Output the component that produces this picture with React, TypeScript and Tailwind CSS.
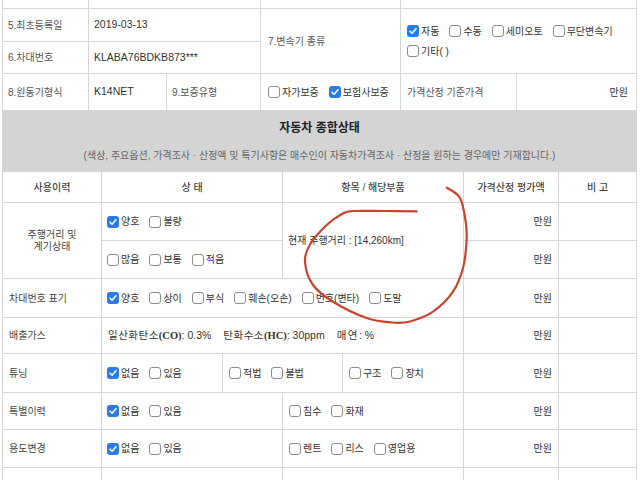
import type { ReactNode } from "react";

/* ── Bits ── */

const LINE = "border-[#d5d5d5]";

function Box({ checked = false }: { checked?: boolean }) {
	if (checked) {
		return (
			<span className="inline-flex size-[12px] shrink-0 items-center justify-center rounded-[3px] bg-[#2a7be4]">
				<svg viewBox="0 0 12 12" className="size-[10px]" fill="none">
					<path d="M2.4 6.2 L4.9 8.6 L9.6 3.2" stroke="#fff" strokeWidth="1.8" strokeLinecap="round" strokeLinejoin="round" />
				</svg>
			</span>
		);
	}
	return <span className="inline-block size-[12px] shrink-0 rounded-[3px] border border-[#8c8c8c] bg-white" />;
}

function Check({ label, checked }: { label: string; checked?: boolean }) {
	return (
		<span className="inline-flex items-center gap-[2px] whitespace-nowrap">
			<Box checked={checked} />
			<span>{label}</span>
		</span>
	);
}

function Checks({ items, className = "" }: { items: [string, boolean?][]; className?: string }) {
	return (
		<div className={`flex flex-wrap items-center gap-x-[10px] gap-y-[5px] ${className}`}>
			{items.map(([label, checked]) => (
				<Check key={label} label={label} checked={checked} />
			))}
		</div>
	);
}

function Cell({ children, className = "" }: { children?: ReactNode; className?: string }) {
	return <div className={`flex items-center border-r border-b ${LINE} bg-white ${className}`}>{children}</div>;
}

/* ── Red hand-drawn loop ── */

const LOOP: [number, number][] = [
	[446.7, 187.7], [460, 198], [465.7, 221.7], [466.5, 242], [463, 268], [453, 291.7],
	[433, 311.7], [410, 321.5], [392, 322.5], [366.7, 318], [333, 301.7], [313, 285],
	[305, 262], [310, 244.5], [326.7, 225], [342, 214], [353, 211], [385, 211], [416.7, 211.3],
];

function smooth(pts: [number, number][]) {
	let d = `M${pts[0][0]},${pts[0][1]}`;
	for (let i = 0; i < pts.length - 1; i++) {
		const p0 = pts[i - 1] ?? pts[i];
		const p1 = pts[i];
		const p2 = pts[i + 1];
		const p3 = pts[i + 2] ?? p2;
		const c1 = [p1[0] + (p2[0] - p0[0]) / 6, p1[1] + (p2[1] - p0[1]) / 6];
		const c2 = [p2[0] - (p3[0] - p1[0]) / 6, p2[1] - (p3[1] - p1[1]) / 6];
		d += ` C${c1[0]},${c1[1]} ${c2[0]},${c2[1]} ${p2[0]},${p2[1]}`;
	}
	return d;
}

/* ── Page ── */

export default function App() {
	return (
		<div className="relative h-[480px] w-[640px] overflow-hidden bg-white font-['Liberation_Sans','Noto_Sans_CJK_KR',sans-serif] text-[10px] text-[#333]">
			{/* Vehicle basics */}
			<div className={`ml-[2px] grid w-[635px] grid-cols-[86px_78px_94px_140px_116px_120px] grid-rows-[9px_33px_32px_37px] border-l ${LINE}`}>
				<Cell />
				<Cell className="col-span-2" />
				<Cell />
				<Cell className="col-span-2" />

				<Cell className="pl-[5px] text-[#555]">5.최초등록일</Cell>
				<Cell className="col-span-2 pl-[5px] text-[10.5px]">2019-03-13</Cell>
				<Cell className="row-span-2 pl-[7px] text-[#555]">7.변속기 종류</Cell>
				<Cell className="col-span-2 row-span-2 pl-[6px]">
					<Checks
						className="w-[230px]"
						items={[["자동", true], ["수동"], ["세미오토"], ["무단변속기"], ["기타( )"]]}
					/>
				</Cell>

				<Cell className="pl-[5px] text-[#555]">6.차대번호</Cell>
				<Cell className="col-span-2 pl-[5px] text-[10.5px]">KLABA76BDKB873***</Cell>

				<Cell className="pl-[5px] text-[#555]">8.원동기형식</Cell>
				<Cell className="pl-[5px] text-[10.5px]">K14NET</Cell>
				<Cell className="pl-[5px] text-[#555]">9.보증유형</Cell>
				<Cell className="pl-[7px]">
					<Checks items={[["자가보증"], ["보험사보증", true]]} />
				</Cell>
				<Cell className="pl-[6px] text-[#555]">가격산정 기준가격</Cell>
				<Cell className="justify-end pr-[8px]">만원</Cell>
			</div>

			{/* Overall condition */}
			<div className={`ml-[2px] flex h-[61px] w-[635px] flex-col items-center border-l border-r border-b ${LINE} bg-[#d4d4d4]`}>
				<p className="mt-[8px] text-[12px] font-bold text-[#222]">자동차 종합상태</p>
				<p className="mt-[11px] text-[10px] text-[#666]">
					(색상, 주요옵션, 가격조사 · 산정액 및 특기사항은 매수인이 자동차가격조사 · 산정을 원하는 경우에만 기재합니다.)
				</p>
			</div>

			<div
				className={`ml-[2px] grid w-[635px] grid-cols-[99px_121px_60px_60px_121px_95px_78px] grid-rows-[31px_38px_38px_39px_36px_39px_37px_38px_20px] border-l ${LINE}`}
			>
				{/* Header */}
				<Cell className="justify-center font-medium text-[#444]">사용이력</Cell>
				<Cell className="col-span-2 justify-center font-medium text-[#444]">상 태</Cell>
				<Cell className="col-span-2 justify-center font-medium text-[#444]">항목 / 해당부품</Cell>
				<Cell className="justify-center font-medium text-[#444]">가격산정 평가액</Cell>
				<Cell className="justify-center font-medium text-[#444]">비 고</Cell>

				{/* Mileage */}
				<Cell className="row-span-2 justify-center text-center leading-[12px] text-[#444]">
					주행거리 및
					<br />
					계기상태
				</Cell>
				<Cell className="col-span-2 pl-[5px]">
					<Checks items={[["양호", true], ["불량"]]} />
				</Cell>
				<Cell className="col-span-2 row-span-2 pl-[5px]">현재 주행거리 : [14,260km]</Cell>
				<Cell className="justify-end pr-[6px]">만원</Cell>
				<Cell />
				<Cell className="col-span-2 pl-[5px]">
					<Checks items={[["많음"], ["보통"], ["적음"]]} />
				</Cell>
				<Cell className="justify-end pr-[6px]">만원</Cell>
				<Cell />

				{/* VIN marking */}
				<Cell className="pl-[6px] text-[#444]">차대번호 표기</Cell>
				<Cell className="col-span-4 pl-[5px]">
					<Checks items={[["양호", true], ["상이"], ["부식"], ["훼손(오손)"], ["번호(변타)"], ["도말"]]} />
				</Cell>
				<Cell className="justify-end pr-[6px]">만원</Cell>
				<Cell />

				{/* Emissions */}
				<Cell className="pl-[6px] text-[#444]">배출가스</Cell>
				<Cell className="col-span-4 pl-[6px] text-[10.5px]">
					<span className="tracking-[0.5px]">일산화탄소</span>
					<span className="font-['Liberation_Serif'] font-bold">(CO)</span>
					<span>: 0.3%</span>
					<span className="ml-[12px] tracking-[0.5px]">탄화수소</span>
					<span className="font-['Liberation_Serif'] font-bold">(HC)</span>
					<span>: 30ppm</span>
					<span className="ml-[12px] tracking-[1.5px]">매연</span>
					<span>: %</span>
				</Cell>
				<Cell className="justify-end pr-[6px]">만원</Cell>
				<Cell />

				{/* Tuning */}
				<Cell className="pl-[6px] text-[#444]">튜닝</Cell>
				<Cell className="pl-[5px]">
					<Checks items={[["없음", true], ["있음"]]} />
				</Cell>
				<Cell className="col-span-2 pl-[6px]">
					<Checks items={[["적법"], ["불법"]]} />
				</Cell>
				<Cell className="pl-[6px]">
					<Checks items={[["구조"], ["장치"]]} />
				</Cell>
				<Cell className="justify-end pr-[6px]">만원</Cell>
				<Cell />

				{/* Special history */}
				<Cell className="pl-[6px] text-[#444]">특별이력</Cell>
				<Cell className="col-span-2 pl-[5px]">
					<Checks items={[["없음", true], ["있음"]]} />
				</Cell>
				<Cell className="col-span-2 pl-[6px]">
					<Checks items={[["침수"], ["화재"]]} />
				</Cell>
				<Cell className="justify-end pr-[6px]">만원</Cell>
				<Cell />

				{/* Use change */}
				<Cell className="pl-[6px] text-[#444]">용도변경</Cell>
				<Cell className="col-span-2 pl-[5px]">
					<Checks items={[["없음", true], ["있음"]]} />
				</Cell>
				<Cell className="col-span-2 pl-[6px]">
					<Checks items={[["렌트"], ["리스"], ["영업용"]]} />
				</Cell>
				<Cell className="justify-end pr-[6px]">만원</Cell>
				<Cell />

				<Cell />
				<Cell className="col-span-2" />
				<Cell className="col-span-2" />
				<Cell />
				<Cell />
			</div>

			{/* Pen mark */}
			<svg className="pointer-events-none absolute left-0 top-0" width="640" height="480" fill="none">
				<path d={smooth(LOOP)} stroke="#c8442c" strokeWidth="2.2" strokeLinecap="round" strokeLinejoin="round" />
			</svg>
		</div>
	);
}
